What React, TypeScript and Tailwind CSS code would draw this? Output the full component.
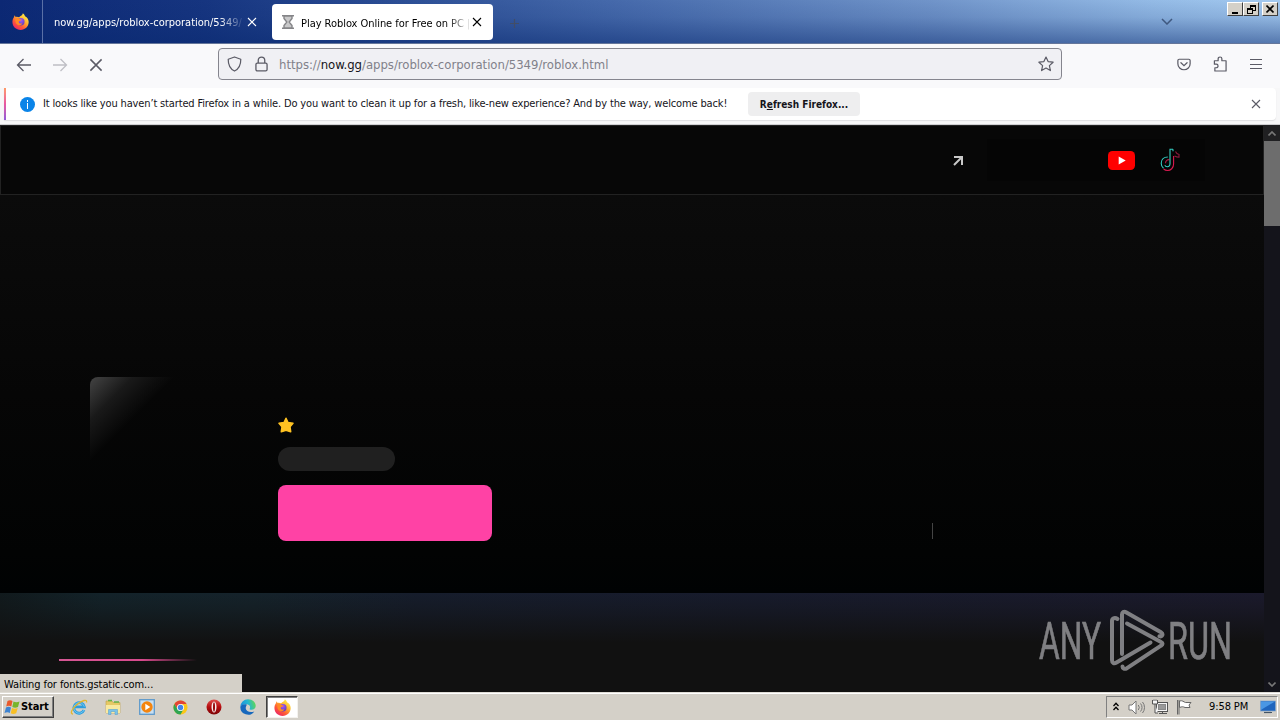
import { ReactNode } from 'react'

const ui = "font-['DejaVu_Sans_Condensed','DejaVu_Sans',sans-serif] whitespace-nowrap"

function FirefoxLogo({ className }: { className?: string }) {
  return (
    <svg viewBox="0 0 16 16" className={className}>
      <defs>
        <linearGradient id="ff-flame" x1="0.85" y1="0.1" x2="0.2" y2="1">
          <stop offset="0" stopColor="#fff04a" />
          <stop offset="0.35" stopColor="#ffb02e" />
          <stop offset="0.65" stopColor="#ff5a36" />
          <stop offset="1" stopColor="#e8206c" />
        </linearGradient>
        <radialGradient id="ff-globe" cx="0.5" cy="0.3" r="0.7">
          <stop offset="0" stopColor="#a45cf5" />
          <stop offset="1" stopColor="#5a3bbd" />
        </radialGradient>
      </defs>
      <path
        d="M10.2 0.2c1 .8 1.7 1.700 2.100 2.800C14.300 3.800 15.700 6 15.700 8.500 15.700 12.700 12.300 16 8.100 16 3.800 16 .4 12.700.4 8.500.4 6.700 1 5 1.800 4c.1-.8.400-1.500.9-2 .1.900.500 1.400 1 1.700 1-.2 2-.1 2.900.400C7.500 2.700 9.900 2.600 10.200.2z"
        fill="url(#ff-flame)"
      />
      <circle cx="8.300" cy="8.300" r="3.500" fill="url(#ff-globe)" />
      <path d="M3.400 5.200c1.600-.8 2.900-.6 4.200.700l1.500.3c-.2.900-1.200 1.100-2 1.400-.9.400-.9 1.100-.4 1.800.9.900 2 .5 3.100.200-.8 1.700-2.500 2.400-4.200 1.700C3.500 10.400 2.600 7.700 3.400 5.200z" fill="#ff8a25" />
    </svg>
  )
}

function CloseIcon({ className }: { className?: string }) {
  return (
    <svg viewBox="0 0 10 10" className={className} fill="none" stroke="currentColor" strokeWidth="1.1">
      <path d="M1 1l8 8M9 1l-8 8" />
    </svg>
  )
}

function WindowButton({ children }: { children: ReactNode }) {
  return (
    <div className="w-4 h-[14px] bg-[#d4d0c8] border border-t-white border-l-white border-r-[#404040] border-b-[#404040] flex items-center justify-center text-black">
      {children}
    </div>
  )
}

function TabStrip() {
  return (
    <div className="h-11 flex items-stretch relative bg-[linear-gradient(to_bottom,rgba(8,40,110,0)_0%,rgba(8,40,110,0.12)_40%,rgba(8,40,110,0.5)_100%),linear-gradient(to_right,#0c2874_0%,#163580_16%,#2a4c93_30%,#4468aa_47%,#7195ca_73%,#94bbe6_90%,#a4caf0_100%)] border-b border-[#65769a]">
      <div className="w-[43px] flex items-center justify-center border-r border-[#5a70a6] pr-[2px]">
        <FirefoxLogo className="w-[17px] h-[17px]" />
      </div>
      <div className="w-[229px] flex items-center pl-[11px] text-white">
        <div className={`${ui} w-[189px] text-[11px] tracking-[-0.02px] mt-1 [mask-image:linear-gradient(to_right,#000_165px,transparent_191px)]`}>
          now.gg/apps/roblox-corporation/5349/
        </div>
        <CloseIcon className="w-[10px] h-[10px] ml-[4px] mt-px" />
      </div>
      <div className="w-[221px] h-9 mt-1 rounded bg-white flex items-center pl-[10px] text-black">
        <svg viewBox="0 0 12 14" className="w-3 h-[14px]" fill="#c9c9ca" stroke="#858588" strokeWidth="1.4">
          <path d="M0 .8h12M0 13.200h12" />
          <path d="M2 1v2.500L4.800 7 2 10.500V13h8v-2.500L7.200 7 10 3.500V1z" />
        </svg>
        <div className={`${ui} w-[168px] text-[11px] ml-[7px] mt-1 tracking-[-0.04px] [mask-image:linear-gradient(to_right,#000_145px,transparent_172px)]`}>
          Play Roblox Online for Free on PC |
        </div>
        <CloseIcon className="w-[10px] h-[10px] ml-[3px]" />
      </div>
      <svg viewBox="0 0 10 10" className="w-[9px] h-[9px] ml-[17px] mt-[19px] shrink-0" fill="none" stroke="#424d66" strokeWidth="1.3">
        <path d="M5 0v10M0 5h10" />
      </svg>
      <svg viewBox="0 0 12 7" className="w-3 h-[7px] absolute left-[1161px] top-[18px]" fill="none" stroke="#3f587f" strokeWidth="1.500">
        <path d="M1 1l5 5 5-5" />
      </svg>
      <div className="absolute right-[2px] top-[2px] flex">
        <WindowButton>
          <div className="w-[6px] h-[2px] bg-black mt-[7px] mr-px" />
        </WindowButton>
        <WindowButton>
          <svg viewBox="0 0 9 9" className="w-[9px] h-[9px]" fill="none" stroke="#000" shapeRendering="crispEdges">
            <path d="M3 2.500V.5h5.500v5H6M3 1.500h5.500M.5 3.500h5v5h-5zM.5 4.500h5" />
          </svg>
        </WindowButton>
        <div className="w-[3px]" />
        <WindowButton>
          <svg viewBox="0 0 8 8" className="w-2 h-2" stroke="#000" strokeWidth="1.600">
            <path d="M.5.5l7 7M7.500.5l-7 7" />
          </svg>
        </WindowButton>
      </div>
    </div>
  )
}

function Toolbar() {
  return (
    <div className="h-11 bg-[#f9f9fb] flex items-center pb-1 text-[#5b5b66]">
      <svg viewBox="0 0 16 14" className="w-4 h-[14px] ml-4 mt-px" fill="none" stroke="currentColor" strokeWidth="1.300">
        <path d="M15 7H1.500M7.500 1l-6 6 6 6" />
      </svg>
      <svg viewBox="0 0 16 14" className="w-4 h-[14px] ml-5 mt-px text-[#bfbfc5]" fill="none" stroke="currentColor" strokeWidth="1.300">
        <path d="M1 7h13.500M8.500 1l6 6-6 6" />
      </svg>
      <CloseIcon className="w-[14px] h-[14px] ml-[21px] mt-px" />
      <div className="ml-[115px] w-[844px] h-8 rounded border border-[#85858e] bg-[#f0f0f4] flex items-center pl-2">
        <svg viewBox="0 0 16 17" className="w-[15px] h-4" fill="none" stroke="currentColor" strokeWidth="1.300">
          <path d="M8 1L1.300 3.400C1.200 9 3 13.500 8 16c5-2.500 6.800-7 6.700-12.600z" strokeLinejoin="round" />
        </svg>
        <svg viewBox="0 0 14 17" className="w-[13px] h-4 ml-[13px]" fill="none" stroke="currentColor" strokeWidth="1.400">
          <rect x="1" y="7.500" width="12" height="8.500" rx="1.500" />
          <path d="M3.500 7.500V4.500a3.500 3.500 0 017 0v3" />
        </svg>
        <div className={`${ui} ml-[11px] mt-px text-[13px] text-[#81818a] tracking-[-0.03px] w-[759px]`}>
          https://<span className="text-[#15141a]">now.gg</span>/apps/roblox-corporation/5349/roblox.html
        </div>
        <svg viewBox="0 0 16 16" className="w-4 h-4" fill="none" stroke="currentColor" strokeWidth="1.200" strokeLinejoin="round">
          <path d="M8 1l2.100 4.600 5 .6-3.700 3.400 1 5L8 12.100l-4.400 2.500 1-5L.9 6.200l5-.6z" />
        </svg>
      </div>
      <svg viewBox="0 0 16 14" className="w-[14px] h-[13px] ml-[115px]" fill="none" stroke="currentColor" strokeWidth="1.400">
        <path d="M2.500 1h11A1.500 1.500 0 0115 2.500V6A7 7 0 011 6V2.500A1.500 1.500 0 012.500 1z" />
        <path d="M4.500 5L8 8.300 11.500 5" strokeLinecap="round" />
      </svg>
      <svg viewBox="0 0 15 17" className="w-[14px] h-4 ml-[22px]" fill="none" stroke="currentColor" strokeWidth="1.300" strokeLinejoin="round">
        <path d="M1.500 5h4V3a2 2 0 014 0v2H14v11H2v-3.500h1.500a1.800 1.800 0 000-3.800H1.500z" />
      </svg>
      <svg viewBox="0 0 12 10" className="w-3 h-[10px] ml-[23px]" stroke="currentColor" shapeRendering="crispEdges">
        <path d="M0 .5h12M0 5.500h12M0 9.500h12" />
      </svg>
    </div>
  )
}

function NotificationBar() {
  return (
    <div className="h-[37px] bg-[#f7f7f8] border-b border-[#cfcfd2] pl-1">
      <div className="w-[1272px] h-8 bg-white rounded-r shadow-[0_1px_1px_#dedee1] flex items-center text-[#15141a]">
        <div className="w-[2px] h-8 bg-gradient-to-b from-[#ff9a66] via-[#e857a0] to-[#9059d8]" />
        <div className="ml-[14px] w-[15px] h-[15px] rounded-full bg-[#0a84e8] flex flex-col items-center justify-center gap-px">
          <div className="w-px h-[2px] bg-white" />
          <div className="w-px h-[6px] bg-white" />
        </div>
        <div className={`${ui} text-[11px] ml-2 w-[705px] tracking-[-0.147px]`}>
          It looks like you haven’t started Firefox in a while. Do you want to clean it up for a fresh, like-new experience? And by the way, welcome back!
        </div>
        <div className={`${ui} w-28 h-6 rounded bg-[#eeeeef] text-[10px] font-bold flex items-center justify-center`}>
          <span>R<span className="underline">e</span>fresh Firefox...</span>
        </div>
        <CloseIcon className="w-[10px] h-[10px] ml-[391px] text-[#5b5b66]" />
      </div>
    </div>
  )
}

function SiteHeader() {
  return (
    <div className="h-[70px] bg-[#070707] border border-[#222] flex items-center">
      <svg viewBox="0 0 10 10" className="w-[10px] h-[10px] ml-[952px] mt-px" fill="none" stroke="#c8c8c8" strokeWidth="2">
        <path d="M1 1h8v8M9 1L1 9" />
      </svg>
      <div className="ml-[24px] w-[218px] h-[42px] bg-[#050505] flex items-center">
        <svg viewBox="0 0 27 19" className="w-[27px] h-[19px] ml-[121px]">
          <rect width="27" height="19" rx="4.500" fill="#f00" />
          <path d="M10.700 5.500l7 4-7 4z" fill="#fff" />
        </svg>
        <svg viewBox="0 0 20 24" className="w-5 h-6 ml-[25px]" fill="none" strokeWidth="1.100">
          <path d="M15.500 3.500c.7 1.700 1.800 2.600 3.500 3v2.800c-1.500 0-3-.4-4.500-1.200" stroke="#8e1a3c" />
          <path d="M13.600 8V16c0 4-3 6.500-6 6.500-1.800 0-3-.6-4-1.500" stroke="#d91a50" />
          <path d="M9.500 11.700c-2.500-.3-4 1.500-4 3.500" stroke="#b01a45" />
          <path d="M13 1.200h-3V15.500c0 2-1.200 3.200-2.800 3.200-1.200 0-2-.6-2.400-1.500M7.800 9C4 9 1.200 11.500 1.200 15.200c0 2 .8 3.800 2.300 5M13 1.200v2" stroke="#35cfc4" />
        </svg>
      </div>
    </div>
  )
}

function Scrollbar() {
  return (
    <div className="w-4 bg-[#14141b] flex flex-col">
      <div className="h-4 bg-[#202022] flex items-center justify-center">
        <svg viewBox="0 0 8 5" className="w-2 h-[5px]" fill="none" stroke="#777" strokeWidth="1.600">
          <path d="M.5 4.500L4 1l3.500 3.500" />
        </svg>
      </div>
      <div className="h-[85px] bg-[#6d6d6d]" />
      <div className="flex-1" />
      <div className="h-4 flex items-center justify-center">
        <svg viewBox="0 0 8 5" className="w-2 h-[5px]" fill="none" stroke="#777" strokeWidth="1.600">
          <path d="M.5.5L4 4 7.500.5" />
        </svg>
      </div>
    </div>
  )
}

function AnyRunLogo() {
  return (
    <svg viewBox="0 0 204 80" className="w-[204px] h-20 absolute left-[1037px] top-[484px] opacity-90">
      <g fill="#8c8c8f" stroke="#8c8c8f" strokeWidth="0.7" fontFamily="Roboto, sans-serif" fontSize="52" fontWeight="400">
        <text x="2" y="50" textLength="62" lengthAdjust="spacingAndGlyphs">ANY</text>
        <text x="131" y="50" textLength="64" lengthAdjust="spacingAndGlyphs">RUN</text>
      </g>
      <g fill="none" stroke="#8c8c8f" strokeWidth="4" strokeLinejoin="round" strokeLinecap="round">
        <path d="M80.500 10c-3-2-5.500-.5-5.500 2v39c0 3 2 4 4.500 2.500l34-20" />
        <path d="M85 45V5.500c0-2.500 2-3.500 4-2.300l35 20c2.500 1.500 1.500 5-1.500 4" />
        <path d="M90 14.500l34 18.500c2 1 2 2.500 0 3.700l-34 22.500c-2.500 1.300-4.500.5-4.500-1.700" />
      </g>
    </svg>
  )
}

function PageContent() {
  return (
    <div className="h-[567px] flex relative">
      <div className="w-[1264px]">
        <SiteHeader />
        <div className="h-[398px] bg-[linear-gradient(to_bottom,#0b0b0b_0%,#060606_50%,#020303_90%,#000203_100%)] flex pl-[90px]">
          <div className="w-[156px] h-[156px] mt-[182px] rounded-lg bg-[linear-gradient(135deg,#444_0%,#191919_14%,rgba(5,5,5,0)_27%)]" />
          <div className="ml-8 mt-[222px]">
            <svg viewBox="0 0 16 16" className="w-4 h-4" fill="#ffc222" stroke="#ffc222" strokeWidth="1.500" strokeLinejoin="round">
              <path d="M8 1.200l2 4.300 5 .7-3 3.500.7 5L8 13.400l-4.700 1.300.7-5-3-3.500 5-.7z" />
            </svg>
            <div className="mt-[14px] w-[117px] h-6 rounded-full bg-[#202020]" />
            <div className="mt-[14px] w-[214px] h-14 rounded-lg bg-[#ff42a5]" />
          </div>
          <div className="ml-[440px] mt-[328px] w-px h-4 bg-[#444]" />
        </div>
        <div className="h-[99px] bg-[linear-gradient(to_bottom,rgba(17,17,17,0)_0%,rgba(17,17,17,0.25)_15%,#111_50%),linear-gradient(to_right,#111a1d_0%,#13232a_8%,#15232b_20%,#161d2c_33%,#171b2c_60%,#1b1a2c_100%)] flex flex-col justify-between">
          <div className="ml-[59px] mt-[66px] w-[138px] h-[2px] bg-[linear-gradient(to_right,#d65794_0%,#d84a8d_60%,transparent_100%)]" />
          <div className={`${ui} w-[242px] h-[18px] bg-[#d4d0c8] text-[11px] text-black pl-1 leading-[21px] tracking-[-0.09px]`}>
            Waiting for fonts.gstatic.com...
          </div>
        </div>
      </div>
      <Scrollbar />
      <AnyRunLogo />
    </div>
  )
}

function WindowsFlag() {
  return (
    <svg viewBox="0 0 17 16" className="w-[17px] h-4">
      <path d="M3.500 2C5 1 7 1 8.500 2L7.300 7.500C5.800 6.600 4 6.600 2.200 7.500z" fill="#e8592b" />
      <path d="M9.500 2.500c1.700 1 4 1 6 0L14 8c-2 1-4 .8-5.700 0z" fill="#78b52c" />
      <path d="M2 8.500c1.700-.9 3.500-.9 5 0L5.800 14c-1.500-.9-3.400-.9-5.300 0z" fill="#3d83d1" />
      <path d="M8 9c1.800 1 3.800 1 5.700 0l-1.500 5.300c-2 1-3.800 1-5.500 0z" fill="#f8bf24" />
    </svg>
  )
}

function IeIcon() {
  return (
    <svg viewBox="0 0 18 18" className="w-[18px] h-[18px]" fill="none">
      <path d="M14 12a5.300 5.300 0 11.300-3.200H5" stroke="#2d9ddd" strokeWidth="2.800" />
      <path d="M14 12a5.300 5.300 0 11.300-3.200" stroke="#8cd8f8" strokeWidth=".7" />
      <path d="M3 16C-.5 16 2 10.500 7 6.500S17.500.5 16.500 4.500" stroke="#e4b72c" strokeWidth="1.300" />
    </svg>
  )
}

function ExplorerIcon() {
  return (
    <svg viewBox="0 0 18 18" className="w-[18px] h-[18px]">
      <path d="M2 3h6l1 1.500h7V15H2z" fill="#e6c964" stroke="#c1a24a" strokeWidth=".6" />
      <path d="M4 2.500h4M10 4h5" stroke="#66b34a" strokeWidth="1.300" />
      <path d="M2 7h14v8H2z" fill="#f8e9a0" />
      <path d="M4.500 16.500v-5h9v5h-2.500v-3H7v3z" fill="#7cc3e8" stroke="#5ba5d0" strokeWidth=".6" />
    </svg>
  )
}

function MediaIcon() {
  return (
    <svg viewBox="0 0 16 16" className="w-4 h-4">
      <rect x=".7" y=".7" width="14.600" height="14.600" fill="#c8dff2" stroke="#5f9acb" strokeWidth="1.300" />
      <circle cx="8" cy="8" r="5.700" fill="#f4850f" />
      <path d="M6.300 4.800l5 3.200-5 3.200z" fill="#fff" />
    </svg>
  )
}

function ChromeIcon() {
  return (
    <svg viewBox="0 0 16 16" className="w-[15px] h-[15px]">
      <circle cx="8" cy="8" r="7.500" fill="#fbc718" />
      <path d="M1.500 4.250A7.500 7.500 0 0114.500 4.250H8L4.750 9.900z" fill="#e24436" />
      <path d="M1.500 4.250A7.500 7.500 0 008 15.500l3.300-5.600H4.750z" fill="#2fa552" />
      <circle cx="8" cy="8" r="3.800" fill="#fff" />
      <circle cx="8" cy="8" r="2.900" fill="#4285e8" />
    </svg>
  )
}

function OperaIcon() {
  return (
    <svg viewBox="0 0 16 16" className="w-4 h-4">
      <defs>
        <linearGradient id="opera" x1="0" y1="0" x2="0" y2="1">
          <stop offset="0" stopColor="#e0504e" />
          <stop offset="0.5" stopColor="#b50d10" />
          <stop offset="1" stopColor="#7c0406" />
        </linearGradient>
      </defs>
      <circle cx="8" cy="8" r="7.500" fill="url(#opera)" />
      <ellipse cx="8" cy="8" rx="2.500" ry="5.500" fill="#f7eeee" />
      <ellipse cx="8" cy="8" rx="1" ry="4.700" fill="#980a0d" />
    </svg>
  )
}

function EdgeIcon() {
  return (
    <svg viewBox="0 0 16 16" className="w-4 h-4">
      <defs>
        <linearGradient id="edge" x1="0" y1="0.5" x2="1" y2="0.3">
          <stop offset="0" stopColor="#1b8fdd" />
          <stop offset="0.5" stopColor="#24b6d2" />
          <stop offset="1" stopColor="#61d94e" />
        </linearGradient>
      </defs>
      <path d="M.3 8A7.700 7.700 0 018 .3c4.700 0 7.700 3.300 7.700 6.500 0 2.500-1.900 4-4.200 4-1.500 0-2.300-.5-1.700-1.300C11 7.500 9 5.300 6.300 5.300 3 5.300.5 7.200.3 8z" fill="url(#edge)" />
      <path d="M.3 8C.6 6.200 3.400 4.900 6 5.300 8 5.500 5.500 7 5.700 9.200c.2 2.900 4.300 5 8.600 3.200A7.700 7.700 0 01.3 8z" fill="#1768bd" />
    </svg>
  )
}

function Taskbar() {
  return (
    <div className="h-7 bg-[#d4d0c8] border-t border-[#e0ddd6] shadow-[inset_0_1px_0_#fff] flex items-center pb-px pt-[2px]">
      <div className="ml-[2px] w-[52px] h-[22px] border border-t-white border-l-white border-r-[#404040] border-b-[#404040] shadow-[inset_-1px_-1px_0_#808080] flex items-center pl-px">
        <WindowsFlag />
        <span className={`${ui} text-[11px] font-bold text-black tracking-[-0.1px] mt-px`}>Start</span>
      </div>
      <div className="ml-4 flex items-center gap-4">
        <IeIcon />
        <ExplorerIcon />
        <div className="ml-px flex"><MediaIcon /></div>
        <div className="ml-[2px] flex"><ChromeIcon /></div>
        <div className="ml-[2px] flex"><OperaIcon /></div>
        <div className="ml-[2px] flex"><EdgeIcon /></div>
      </div>
      <div className="ml-[10px] w-8 h-[22px] bg-white border border-t-[#404040] border-l-[#404040] border-r-[#f4f2ee] border-b-[#f4f2ee] shadow-[inset_1px_1px_0_#808080] flex items-center justify-center">
        <FirefoxLogo className="w-[17px] h-[17px]" />
      </div>
      <div className="ml-auto mr-[2px] w-[172px] h-[22px] border border-t-[#808080] border-l-[#808080] border-r-white border-b-white flex items-center pl-[6px]">
        <svg viewBox="0 0 6 9" className="w-[6px] h-[9px] mb-[2px]" fill="none" stroke="#000" strokeWidth="1.300">
          <path d="M.5 4L3 1.300 5.500 4M.5 8L3 5.300 5.500 8" />
        </svg>
        <svg viewBox="0 0 17 15" className="w-[17px] h-[15px] ml-[9px]" fill="#fff" stroke="#777" strokeWidth="1">
          <path d="M1 5h3l4-4v13l-4-4H1z" />
          <path d="M10.300 5a4 4 0 010 5M12.500 3.500a6 6 0 010 8M14.500 2a8.500 8.500 0 010 11" fill="none" />
        </svg>
        <svg viewBox="0 0 17 16" className="w-[17px] h-4 ml-[7px]" fill="#f5f5f5" stroke="#555" strokeWidth="1">
          <rect x="4.500" y="3.500" width="11" height="9" />
          <rect x="6.500" y="5.500" width="7" height="5" fill="#999" stroke="#888" />
          <path d="M7 14.500h8M10.500 13v2" />
          <path d="M.5 1v4h5V1M2 .5V2M4 .5V2M3 5v9h3" />
        </svg>
        <svg viewBox="0 0 16 16" className="w-4 h-4 ml-[7px]" fill="#fff" stroke="#666" strokeWidth="1">
          <path d="M1.500 1v14.500M3 1v14.500" />
          <path d="M3.500 2c3-1 4 1 6 1.500H15L13 6l1 2.500H9C7 7.500 6 7.500 3.500 8.500z" />
        </svg>
        <span className={`${ui} text-[11px] text-black ml-[17px] w-[42px] tracking-[-0.1px] mt-px`}>9:58 PM</span>
        <svg viewBox="0 0 16 14" className="w-4 h-[14px] ml-[9px]">
          <rect x=".5" y="1" width="15" height="10" fill="#1f65bd" stroke="#85a6c9" strokeWidth=".7" />
          <path d="M1 1.500h14L4 8 1 10z" fill="#4a97e4" />
          <path d="M4 12.500h8" stroke="#456" strokeWidth="1.200" />
        </svg>
      </div>
    </div>
  )
}

export default function App() {
  return (
    <div className="w-[1280px] h-[720px] overflow-hidden bg-black flex flex-col">
      <TabStrip />
      <Toolbar />
      <NotificationBar />
      <PageContent />
      <Taskbar />
    </div>
  )
}
